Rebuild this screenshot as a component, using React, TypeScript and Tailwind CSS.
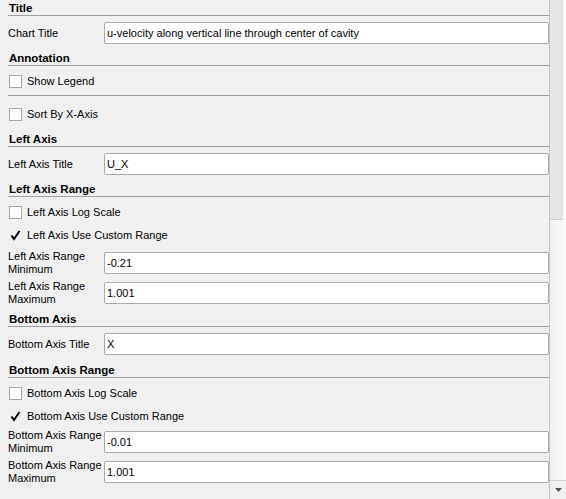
import type { ReactNode } from "react";

const font = { fontFamily: '"Liberation Sans", Arial, sans-serif' };

function Header({ title, className = "" }: { title: string; className?: string }) {
  return (
    <div className={`ml-[8px] flex h-[16px] items-start border-b border-[#a0a0a0] ${className}`}>
      <span className="text-[11.5px] font-bold leading-[14px] pl-[1px] pt-[1px]">{title}</span>
    </div>
  );
}

function Field({ label, value, className = "" }: { label: ReactNode; value: string; className?: string }) {
  return (
    <div className={`flex h-[22px] items-center ${className}`}>
      <div className="w-[104px] pl-[8px] text-[11px] leading-[13px]">{label}</div>
      <div className="flex h-[22px] w-[445px] items-center rounded-[2px] border border-[#ababab] bg-white pl-[2px] text-[11px]">
        {value}
      </div>
    </div>
  );
}

function Check({ label, checked = false }: { label: string; checked?: boolean }) {
  return (
    <div className="flex h-[23px] items-center pl-[9px]">
      {checked ? (
        <svg width="13" height="13" viewBox="0 0 13 13" className="shrink-0">
          <path d="M2.5 6.5 L5 10 L10.5 2" fill="none" stroke="#000" strokeWidth="2" />
        </svg>
      ) : (
        <div className="h-[13px] w-[13px] shrink-0 border border-[#a8a8a8] bg-white" />
      )}
      <span className="pl-[5px] text-[11px]">{label}</span>
    </div>
  );
}

export default function App() {
  return (
    <div className="flex h-[499px] w-[566px] overflow-hidden bg-[#f0f0f0] text-black" style={font}>
      <div className="flex w-[549px] flex-col">
        <Header title="Title" />
        <Field className="mt-[6px]" label="Chart Title" value="u-velocity along vertical line through center of cavity" />
        <Header className="mt-[6px]" title="Annotation" />
        <div className="mt-[4px]">
          <Check label="Show Legend" />
        </div>
        <div className="ml-[8px] mt-[2px] h-px bg-[#a0a0a0]" />
        <div className="mt-[7px]">
          <Check label="Sort By X-Axis" />
        </div>
        <Header className="mt-[5px]" title="Left Axis" />
        <Field className="mt-[6px]" label="Left Axis Title" value="U_X" />
        <Header className="mt-[6px]" title="Left Axis Range" />
        <div className="mt-[4px]">
          <Check label="Left Axis Log Scale" />
          <Check label="Left Axis Use Custom Range" checked />
        </div>
        <Field
          className="mt-[5px]"
          label={
            <>
              Left Axis Range
              <br />
              Minimum
            </>
          }
          value="-0.21"
        />
        <Field
          className="mt-[8px]"
          label={
            <>
              Left Axis Range
              <br />
              Maximum
            </>
          }
          value="1.001"
        />
        <Header className="mt-[7px]" title="Bottom Axis" />
        <Field className="mt-[6px]" label="Bottom Axis Title" value="X" />
        <Header className="mt-[7px]" title="Bottom Axis Range" />
        <div className="mt-[4px]">
          <Check label="Bottom Axis Log Scale" />
          <Check label="Bottom Axis Use Custom Range" checked />
        </div>
        <Field
          className="mt-[3px]"
          label={
            <>
              Bottom Axis Range
              <br />
              Minimum
            </>
          }
          value="-0.01"
        />
        <Field
          className="mt-[8px]"
          label={
            <>
              Bottom Axis Range
              <br />
              Maximum
            </>
          }
          value="1.001"
        />
      </div>
      {/* scrollbar */}
      <div className="flex w-[17px] flex-col border-l border-[#c4c4c4] bg-gradient-to-r from-[#f0f0f0] to-[#fbfbfb]">
        <div className="mr-[3px] h-[220px] border-b border-[#cfcfcf] bg-[#e5e5e5]" />
        <div className="flex-1" />
        <div className="flex h-[19px] items-center justify-center border-t border-[#d0d0d0] bg-[#f0f0f0]">
          <svg width="7" height="4" viewBox="0 0 7 4">
            <path d="M0 0 H7 L3.5 4 Z" fill="#555" />
          </svg>
        </div>
      </div>
    </div>
  );
}
